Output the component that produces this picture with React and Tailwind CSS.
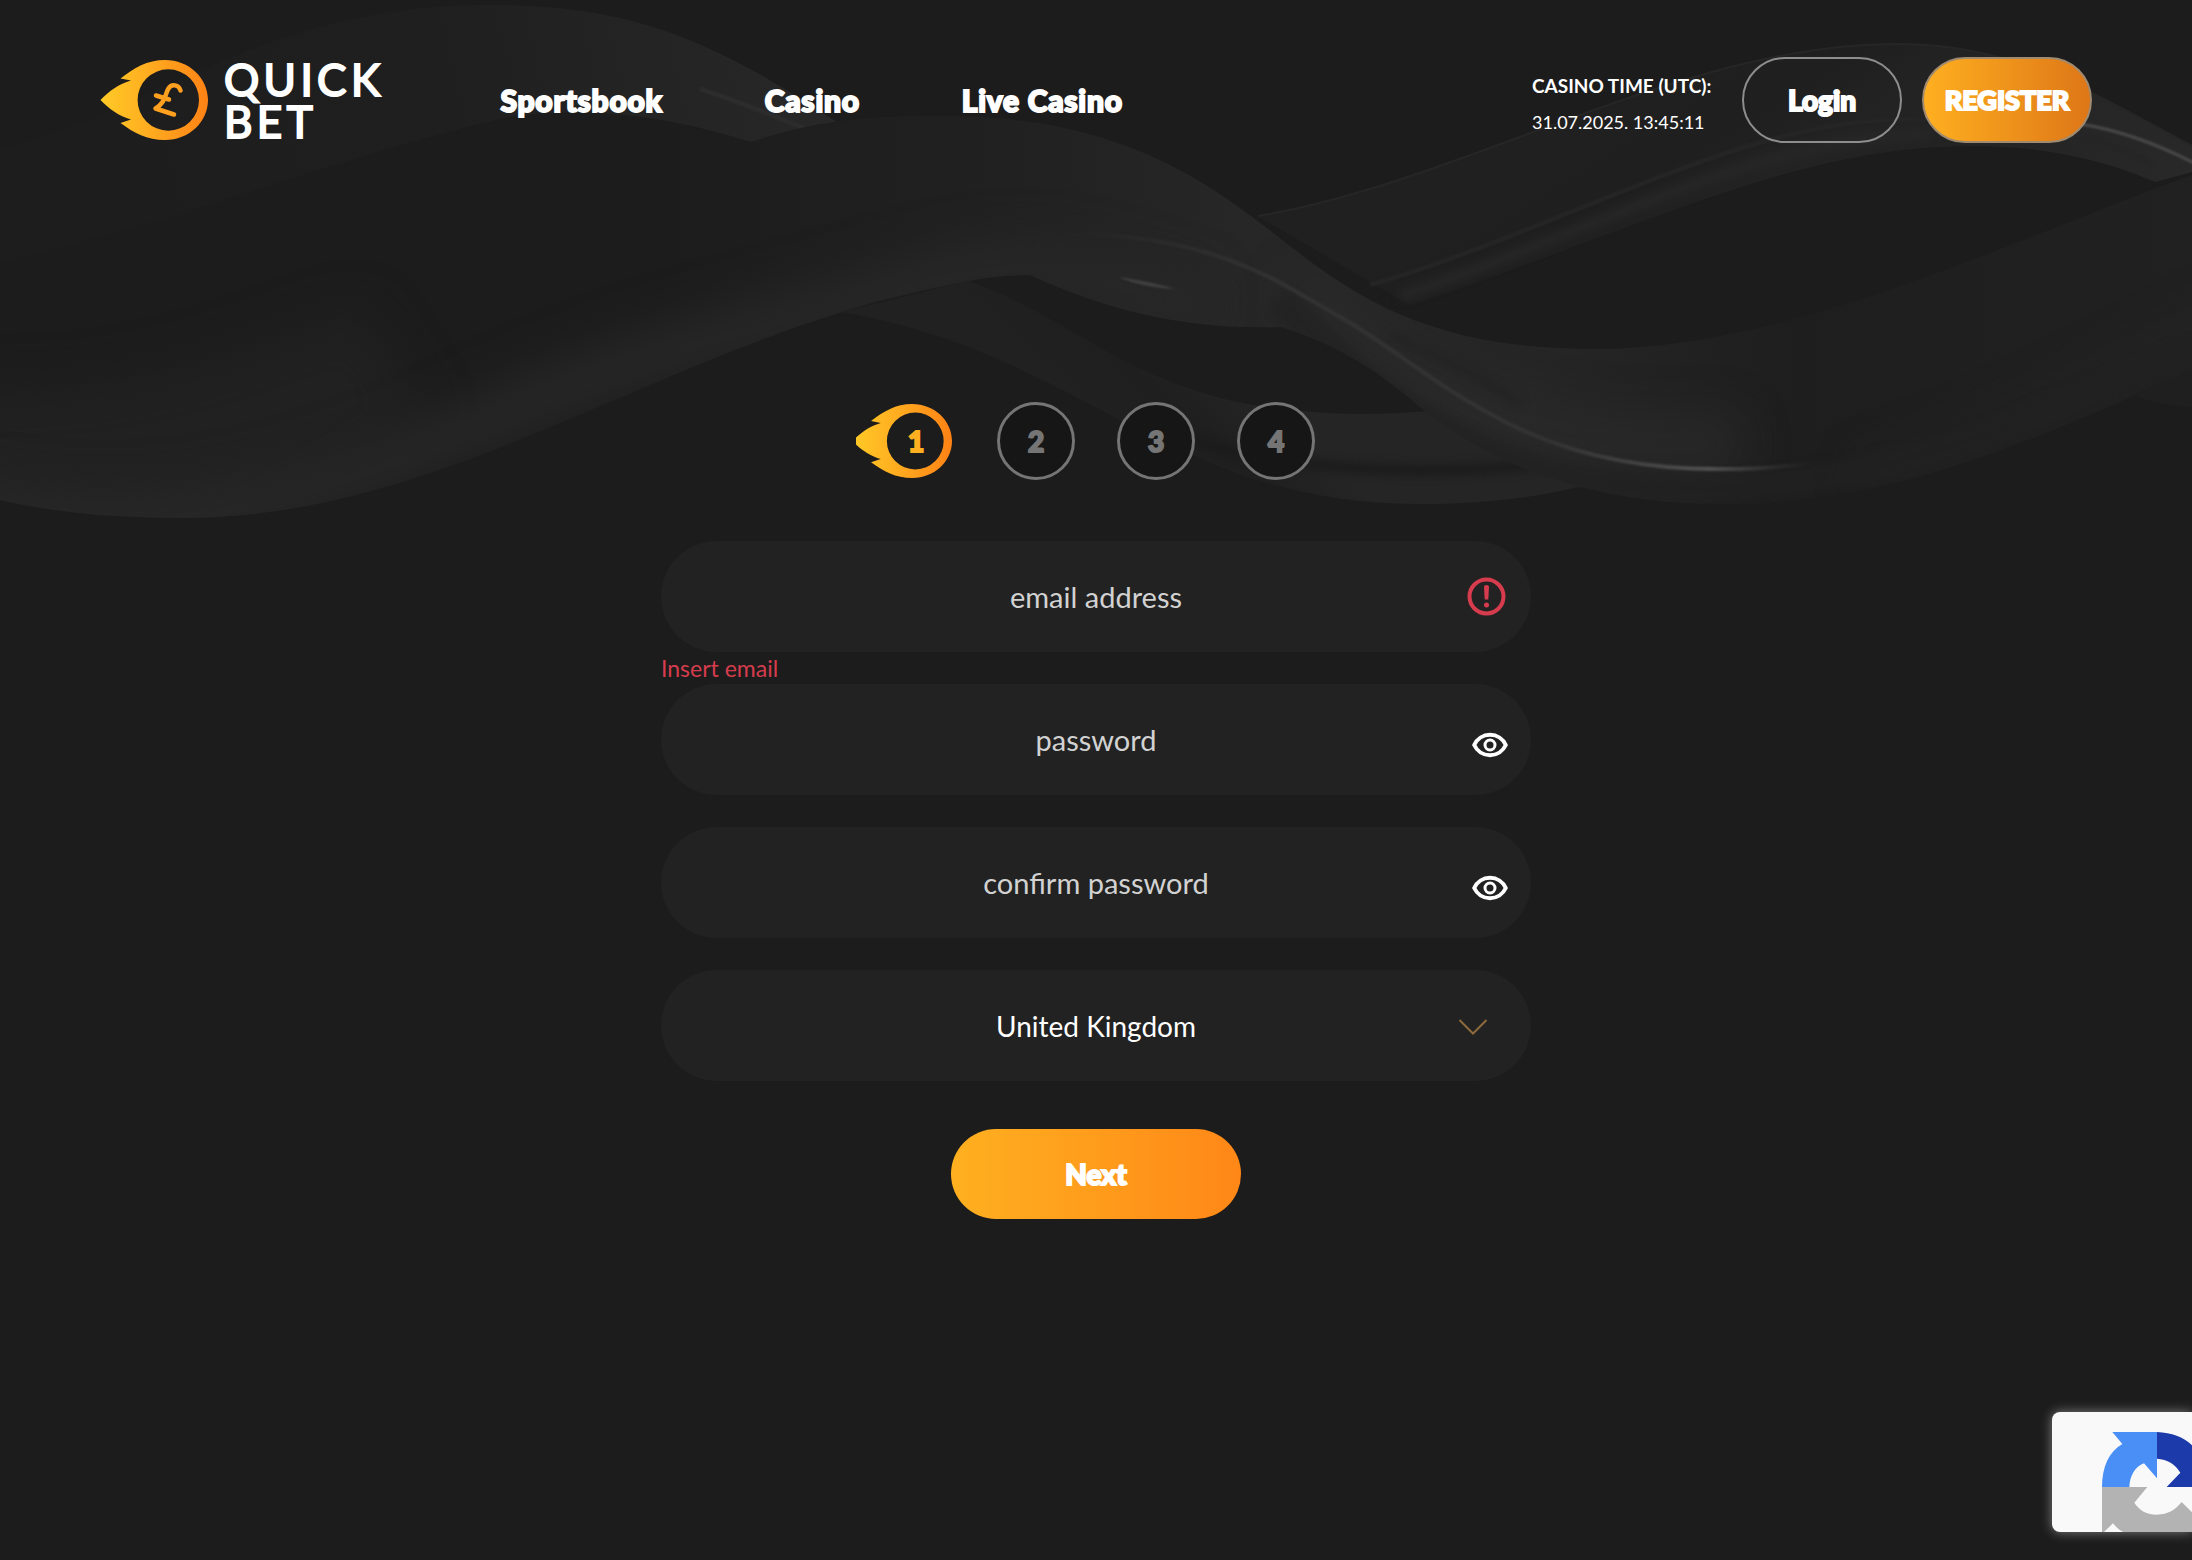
import { useState } from "react";

const RIBBON =
  "M0 262C200 215 330 160 491 121C560 105 650 112 751 142C820 118 880 116 947 116C1100 116 1190 170 1251 216C1330 275 1400 349 1593 349C1790 349 2000 245 2192 175V371C2030 440 1900 504 1722 504C1600 504 1500 470 1426 412C1380 372 1340 345 1281 327C1190 330 1110 312 1030 275C1010 275 990 277 968 281C925 290 885 298 842 312C620 380 420 518 182 518C110 518 50 512 0 500Z";

function Backdrop() {
  return (
    <svg
      className="pointer-events-none absolute inset-x-0 top-0 w-full"
      viewBox="0 0 2192 560"
      fill="none"
      aria-hidden="true"
    >
      <defs>
        <linearGradient id="crest" gradientUnits="userSpaceOnUse" x1="80" y1="240" x2="830" y2="60">
          <stop offset="0" stopColor="#1d1d1d" />
          <stop offset="0.5" stopColor="#1f1f1f" />
          <stop offset="1" stopColor="#282828" />
        </linearGradient>
        <linearGradient id="ribbon" gradientUnits="userSpaceOnUse" x1="0" y1="0" x2="2192" y2="0">
          <stop offset="0" stopColor="#1c1c1c" />
          <stop offset="0.3" stopColor="#1c1c1c" />
          <stop offset="0.36" stopColor="#1e1e1e" />
          <stop offset="0.46" stopColor="#212121" />
          <stop offset="0.57" stopColor="#272727" />
          <stop offset="0.7" stopColor="#262626" />
          <stop offset="0.82" stopColor="#1e1e1e" />
          <stop offset="1" stopColor="#212121" />
        </linearGradient>
        <linearGradient id="arch" gradientUnits="userSpaceOnUse" x1="1600" y1="100" x2="1680" y2="230">
          <stop offset="0" stopColor="#202020" />
          <stop offset="0.6" stopColor="#1f1f1f" />
          <stop offset="1" stopColor="#232323" />
        </linearGradient>
        <linearGradient id="archEnd" gradientUnits="userSpaceOnUse" x1="1960" y1="0" x2="2192" y2="0">
          <stop offset="0" stopColor="#2e2e2e" stopOpacity="0" />
          <stop offset="1" stopColor="#2e2e2e" />
        </linearGradient>
        <linearGradient id="under" gradientUnits="userSpaceOnUse" x1="1100" y1="420" x2="1180" y2="330">
          <stop offset="0" stopColor="#212121" />
          <stop offset="0.5" stopColor="#1f1f1f" />
          <stop offset="1" stopColor="#252525" />
        </linearGradient>
        <linearGradient id="glint" gradientUnits="userSpaceOnUse" x1="1060" y1="0" x2="1815" y2="0">
          <stop offset="0" stopColor="#333333" stopOpacity="0" />
          <stop offset="0.3" stopColor="#333333" />
          <stop offset="0.65" stopColor="#343434" />
          <stop offset="0.86" stopColor="#525252" />
          <stop offset="1" stopColor="#3a3a3a" stopOpacity="0" />
        </linearGradient>
        <filter id="soft1" colorInterpolationFilters="sRGB" filterUnits="userSpaceOnUse" x="0" y="0" width="2192" height="560">
          <feGaussianBlur stdDeviation="1" />
        </filter>
        <filter id="soft4" colorInterpolationFilters="sRGB" filterUnits="userSpaceOnUse" x="0" y="0" width="2192" height="560">
          <feGaussianBlur stdDeviation="4" />
        </filter>
        <filter id="soft24" colorInterpolationFilters="sRGB" filterUnits="userSpaceOnUse" x="-200" y="-200" width="2600" height="960">
          <feGaussianBlur stdDeviation="24" />
        </filter>
        <clipPath id="ribbonClip">
          <path d={RIBBON} />
        </clipPath>
      </defs>

      {/* Left crest */}
      <path
        d="M0 150C160 110 260 5 491 5C640 5 720 45 838 123L751 142C650 110 560 105 491 121C330 160 200 215 0 262Z"
        fill="url(#crest)"
      />
      <path d="M700 89C740 102 775 116 806 129" stroke="#2e2e2e" strokeWidth="4" filter="url(#soft1)" />

      {/* Right arch */}
      <path
        d="M1258 216C1470 180 1680 44 1897 44C2010 44 2080 85 2192 146V172L2155 182C2100 158 2040 146 1973 146C1790 146 1640 230 1410 305Z"
        fill="url(#arch)"
      />
      <path
        d="M1900 44C2010 44 2080 85 2192 146V172L2155 182C2100 158 2040 146 1973 146Z"
        fill="url(#archEnd)"
        opacity="0.5"
      />
      <path d="M1370 285C1560 230 1740 120 1900 120C1990 118 2060 118 2155 165" stroke="#262626" strokeWidth="4" filter="url(#soft1)" />
      <path d="M1400 296C1590 235 1750 138 1930 134" stroke="#272727" strokeWidth="10" filter="url(#soft4)" />
      <path d="M1258 216C1470 180 1680 44 1897 44C2010 44 2080 85 2192 146" stroke="#262626" strokeWidth="2" />
      <path d="M2080 124C2120 130 2155 143 2194 163" stroke="#4a4a4a" strokeWidth="3" filter="url(#soft1)" />

      {/* Lower band passing behind */}
      <path
        d="M842 312L968 281C1080 320 1140 400 1304 411C1350 416 1390 414 1430 411L1585 485C1530 500 1470 504 1418 504C1170 504 1080 352 842 312Z"
        fill="url(#under)"
      />
      <path d="M1150 425C1240 465 1400 480 1540 464" stroke="#1b1b1b" strokeWidth="10" filter="url(#soft4)" />

      {/* Main ribbon and its inner shading */}
      <path d={RIBBON} fill="url(#ribbon)" />
      <g clipPath="url(#ribbonClip)">
        <path d="M-60 390C140 400 240 350 360 310L430 420L200 560H-60Z" fill="#212121" filter="url(#soft24)" />
        <path
          d="M-60 500C120 550 300 510 470 430S760 330 900 290S1060 270 1200 310"
          stroke="#282828"
          strokeWidth="50"
          filter="url(#soft24)"
        />
        <path d="M1300 280C1420 420 1560 455 1740 440" stroke="#2b2b2b" strokeWidth="50" opacity="0.8" filter="url(#soft24)" />
        <path d="M1860 480C2000 440 2100 380 2240 310" stroke="#272727" strokeWidth="24" opacity="0.8" filter="url(#soft24)" />
        <path
          d="M1281 300C1380 400 1500 500 1722 488C1900 480 2030 420 2192 350"
          stroke="#222222"
          strokeWidth="28"
          opacity="0.7"
          filter="url(#soft4)"
        />
      </g>
      <path d="M1390 335C1430 355 1480 375 1520 405" stroke="#222222" strokeWidth="6" filter="url(#soft4)" />
      <path
        d="M1060 234C1220 232 1290 290 1342 318C1440 375 1520 471 1722 469C1755 469 1785 467 1812 463"
        stroke="url(#glint)"
        strokeWidth="4"
        filter="url(#soft1)"
      />
      <path d="M1118 277C1135 284 1155 288 1176 289C1158 284 1138 280 1118 277Z" fill="#444444" filter="url(#soft1)" />
      <path d="M2133 395C2150 402 2170 406 2192 407V371Z" fill="#1f1f1f" />
    </svg>
  );
}

function Flame({ id, className }) {
  return (
    <svg
      className={className}
      viewBox="0 0 108 80"
      preserveAspectRatio="xMaxYMid slice"
      fill="none"
      aria-hidden="true"
    >
      <defs>
        <linearGradient id={id} x1="0" y1="0" x2="1" y2="0">
          <stop offset="0" stopColor="#ffca26" />
          <stop offset="0.4" stopColor="#ffb021" />
          <stop offset="1" stopColor="#ff8215" />
        </linearGradient>
      </defs>
      <path
        fillRule="evenodd"
        d="M0.500 40C9 31 19 24 31 20.500L20.500 18.500C34 8 47 0 65 0C89 0 108 18 108 40C108 62 89 80 65 80C47 80 34 73 20.500 63L31 59.500C19 56 9 49 0.500 40ZM68.300 9.300A30.700 30.700 0 1 0 68.300 70.700A30.700 30.700 0 1 0 68.300 9.300Z"
        fill={`url(#${id})`}
      />
    </svg>
  );
}

function Logo() {
  return (
    <a href="#home" aria-label="Quick Bet" className="flex items-center gap-4">
      <span className="relative block h-20 w-27">
        <Flame id="logoFlame" className="h-20 w-27" />
        <svg
          className="absolute left-[52px] top-[22px] h-9 w-8"
          viewBox="0 0 32 36"
          fill="none"
          stroke="#ffa01f"
          strokeWidth="4.500"
          strokeLinecap="round"
          strokeLinejoin="round"
          aria-hidden="true"
        >
          <path d="M28.500 8.500C27 2.500 19.500 1.500 16.500 6.500C13 12 13.500 21 3.500 26.500L22 32.500" />
          <path d="M4 13.500L17 17.500" />
        </svg>
      </span>
      <span className="text-[44px] leading-[42px] tracking-widest text-white [-webkit-text-stroke:2px_#fff]">
        QUICK
        <br />
        BET
      </span>
    </a>
  );
}

function Field({ id, label, type = "text", error, children }) {
  return (
    <div className="flex flex-col">
      <div className="relative">
        <input
          id={id}
          type={type}
          aria-label={label}
          placeholder={label}
          className="block h-[111px] w-full rounded-full bg-[#222222] px-20 text-center text-[29px] text-white outline-none placeholder:text-[#d2d2d2]"
        />
        {children}
      </div>
      <p className="h-8 text-[23px] leading-8 text-[#d63c4d]">{error}</p>
    </div>
  );
}

function PasswordField({ id, label }) {
  const [shown, setShown] = useState(false);
  return (
    <Field id={id} label={label} type={shown ? "text" : "password"}>
      <button
        type="button"
        aria-label={`Show ${label}`}
        onClick={() => setShown(!shown)}
        className="absolute right-[23px] top-[47px]"
      >
        <svg className="h-7 w-9" viewBox="0 0 36 28" fill="none" stroke="#ffffff" aria-hidden="true">
          <path
            d="M2.200 14C5 8 11 3.800 18 3.800S31 8 33.800 14C31 20 25 24.200 18 24.200S5 20 2.200 14Z"
            strokeWidth="4"
            strokeLinejoin="round"
          />
          <circle cx="18" cy="14" r="5" strokeWidth="3" />
        </svg>
      </button>
    </Field>
  );
}

function Steps() {
  return (
    <ol className="flex justify-center gap-[42px] text-[28px] font-black">
      <li
        className="relative flex size-[78px] items-center justify-center text-[#ffb021] [-webkit-text-stroke:2px_#ffb021]"
        aria-current="step"
      >
        <Flame id="stepFlame" className="absolute right-[3px] top-[2px] h-[74px] w-24 max-w-none" />
        <span className="relative">1</span>
      </li>
      {[2, 3, 4].map((n) => (
        <li
          key={n}
          className="flex size-[78px] items-center justify-center rounded-full border-3 border-[#757575] bg-[#161616] text-[#757575] [-webkit-text-stroke:2px_#757575]"
        >
          {n}
        </li>
      ))}
    </ol>
  );
}

function RecaptchaBadge() {
  return (
    <div className="absolute bottom-7 right-0 h-[120px] w-[140px] overflow-hidden rounded-l-lg bg-[#f9f9f9] shadow-[0_0_12px_#808080]">
      <svg className="h-[120px] w-[140px]" viewBox="66 36 420 360" role="img" aria-label="reCAPTCHA">
        <path d="M247 96H381V235L342 190C315 200 299 228 298 261H216C217 200 236 156 277 132Z" fill="#4a8ff5" />
        <path d="M381 96C425 98 460 110 486 136V261H410L451 218C436 192 412 178 381 176Z" fill="#1c3aa9" />
        <path
          d="M216 261H352L313 308C328 331 350 344 381 344C414 343 436 330 455 306L486 337V396H280C268 390 259 382 249 370L222 396H216Z"
          fill="#b3b3b3"
        />
      </svg>
    </div>
  );
}

export default function App() {
  return (
    <div className="relative min-h-screen overflow-hidden bg-[#1c1c1c] font-['Lato','Open_Sans',sans-serif] text-white">
      <Backdrop />

      <header className="relative flex h-[200px] items-center px-[100px]">
        <Logo />
        <nav className="ml-[116px] flex gap-[102px] text-[30px] font-black tracking-wide [-webkit-text-stroke:2px_#fff]">
          <a href="#sportsbook">Sportsbook</a>
          <a href="#casino">Casino</a>
          <a href="#live-casino">Live Casino</a>
        </nav>
        <div className="ml-auto flex items-center">
          <div className="w-[210px] whitespace-nowrap pt-2 leading-9">
            <p className="text-[19px] font-bold">CASINO TIME (UTC):</p>
            <p className="text-[18px]">31.07.2025. 13:45:11</p>
          </div>
          <button
            type="button"
            className="h-[86px] w-40 rounded-full border-2 border-[#8d8d8d] text-[28px] font-black [-webkit-text-stroke:2px_#fff]"
          >
            Login
          </button>
          <button
            type="button"
            className="ml-5 h-[86px] w-[170px] rounded-full border-2 border-[#a08a70] bg-linear-to-r from-[#ffb020] to-[#dd7617] bg-origin-border text-[27px] font-black [-webkit-text-stroke:2px_#fff]"
          >
            REGISTER
          </button>
        </div>
      </header>

      <main className="relative mx-auto w-full max-w-[870px] pb-24 pt-[202px]">
        <Steps />
        <form className="mt-[61px] flex flex-col" onSubmit={(e) => e.preventDefault()}>
          <Field id="email" label="email address" type="email" error="Insert email">
            <svg
              className="absolute right-[25px] top-[36px] size-[39px]"
              viewBox="0 0 39 39"
              fill="none"
              aria-hidden="true"
            >
              <circle cx="19.500" cy="19.500" r="17" stroke="#d63c4d" strokeWidth="4" />
              <path d="M17 9.500Q17 8 19.500 8T22 9.500L21.300 22.500H17.700Z" fill="#d63c4d" />
              <circle cx="19.500" cy="28" r="2.500" fill="#d63c4d" />
            </svg>
          </Field>
          <PasswordField id="password" label="password" />
          <PasswordField id="confirm" label="confirm password" />
          <div className="relative">
            <select
              id="country"
              aria-label="Country"
              className="block h-[111px] w-full appearance-none rounded-full bg-[#222222] px-20 text-center text-[28px] text-white outline-none [text-align-last:center]"
            >
              <option>United Kingdom</option>
            </select>
            <svg
              className="pointer-events-none absolute right-[43px] top-[48px] h-[18px] w-[30px]"
              viewBox="0 0 30 18"
              fill="none"
              stroke="#8f6a3c"
              strokeWidth="2"
              aria-hidden="true"
            >
              <path d="M1.500 2L15 15.500L28.500 2" />
            </svg>
          </div>
          <button
            type="submit"
            className="mx-auto mt-12 h-[90px] w-[290px] rounded-full bg-linear-to-r from-[#ffb020] to-[#ff8717] text-[28px] font-black [-webkit-text-stroke:2px_#fff]"
          >
            Next
          </button>
        </form>
      </main>

      <RecaptchaBadge />
    </div>
  );
}
